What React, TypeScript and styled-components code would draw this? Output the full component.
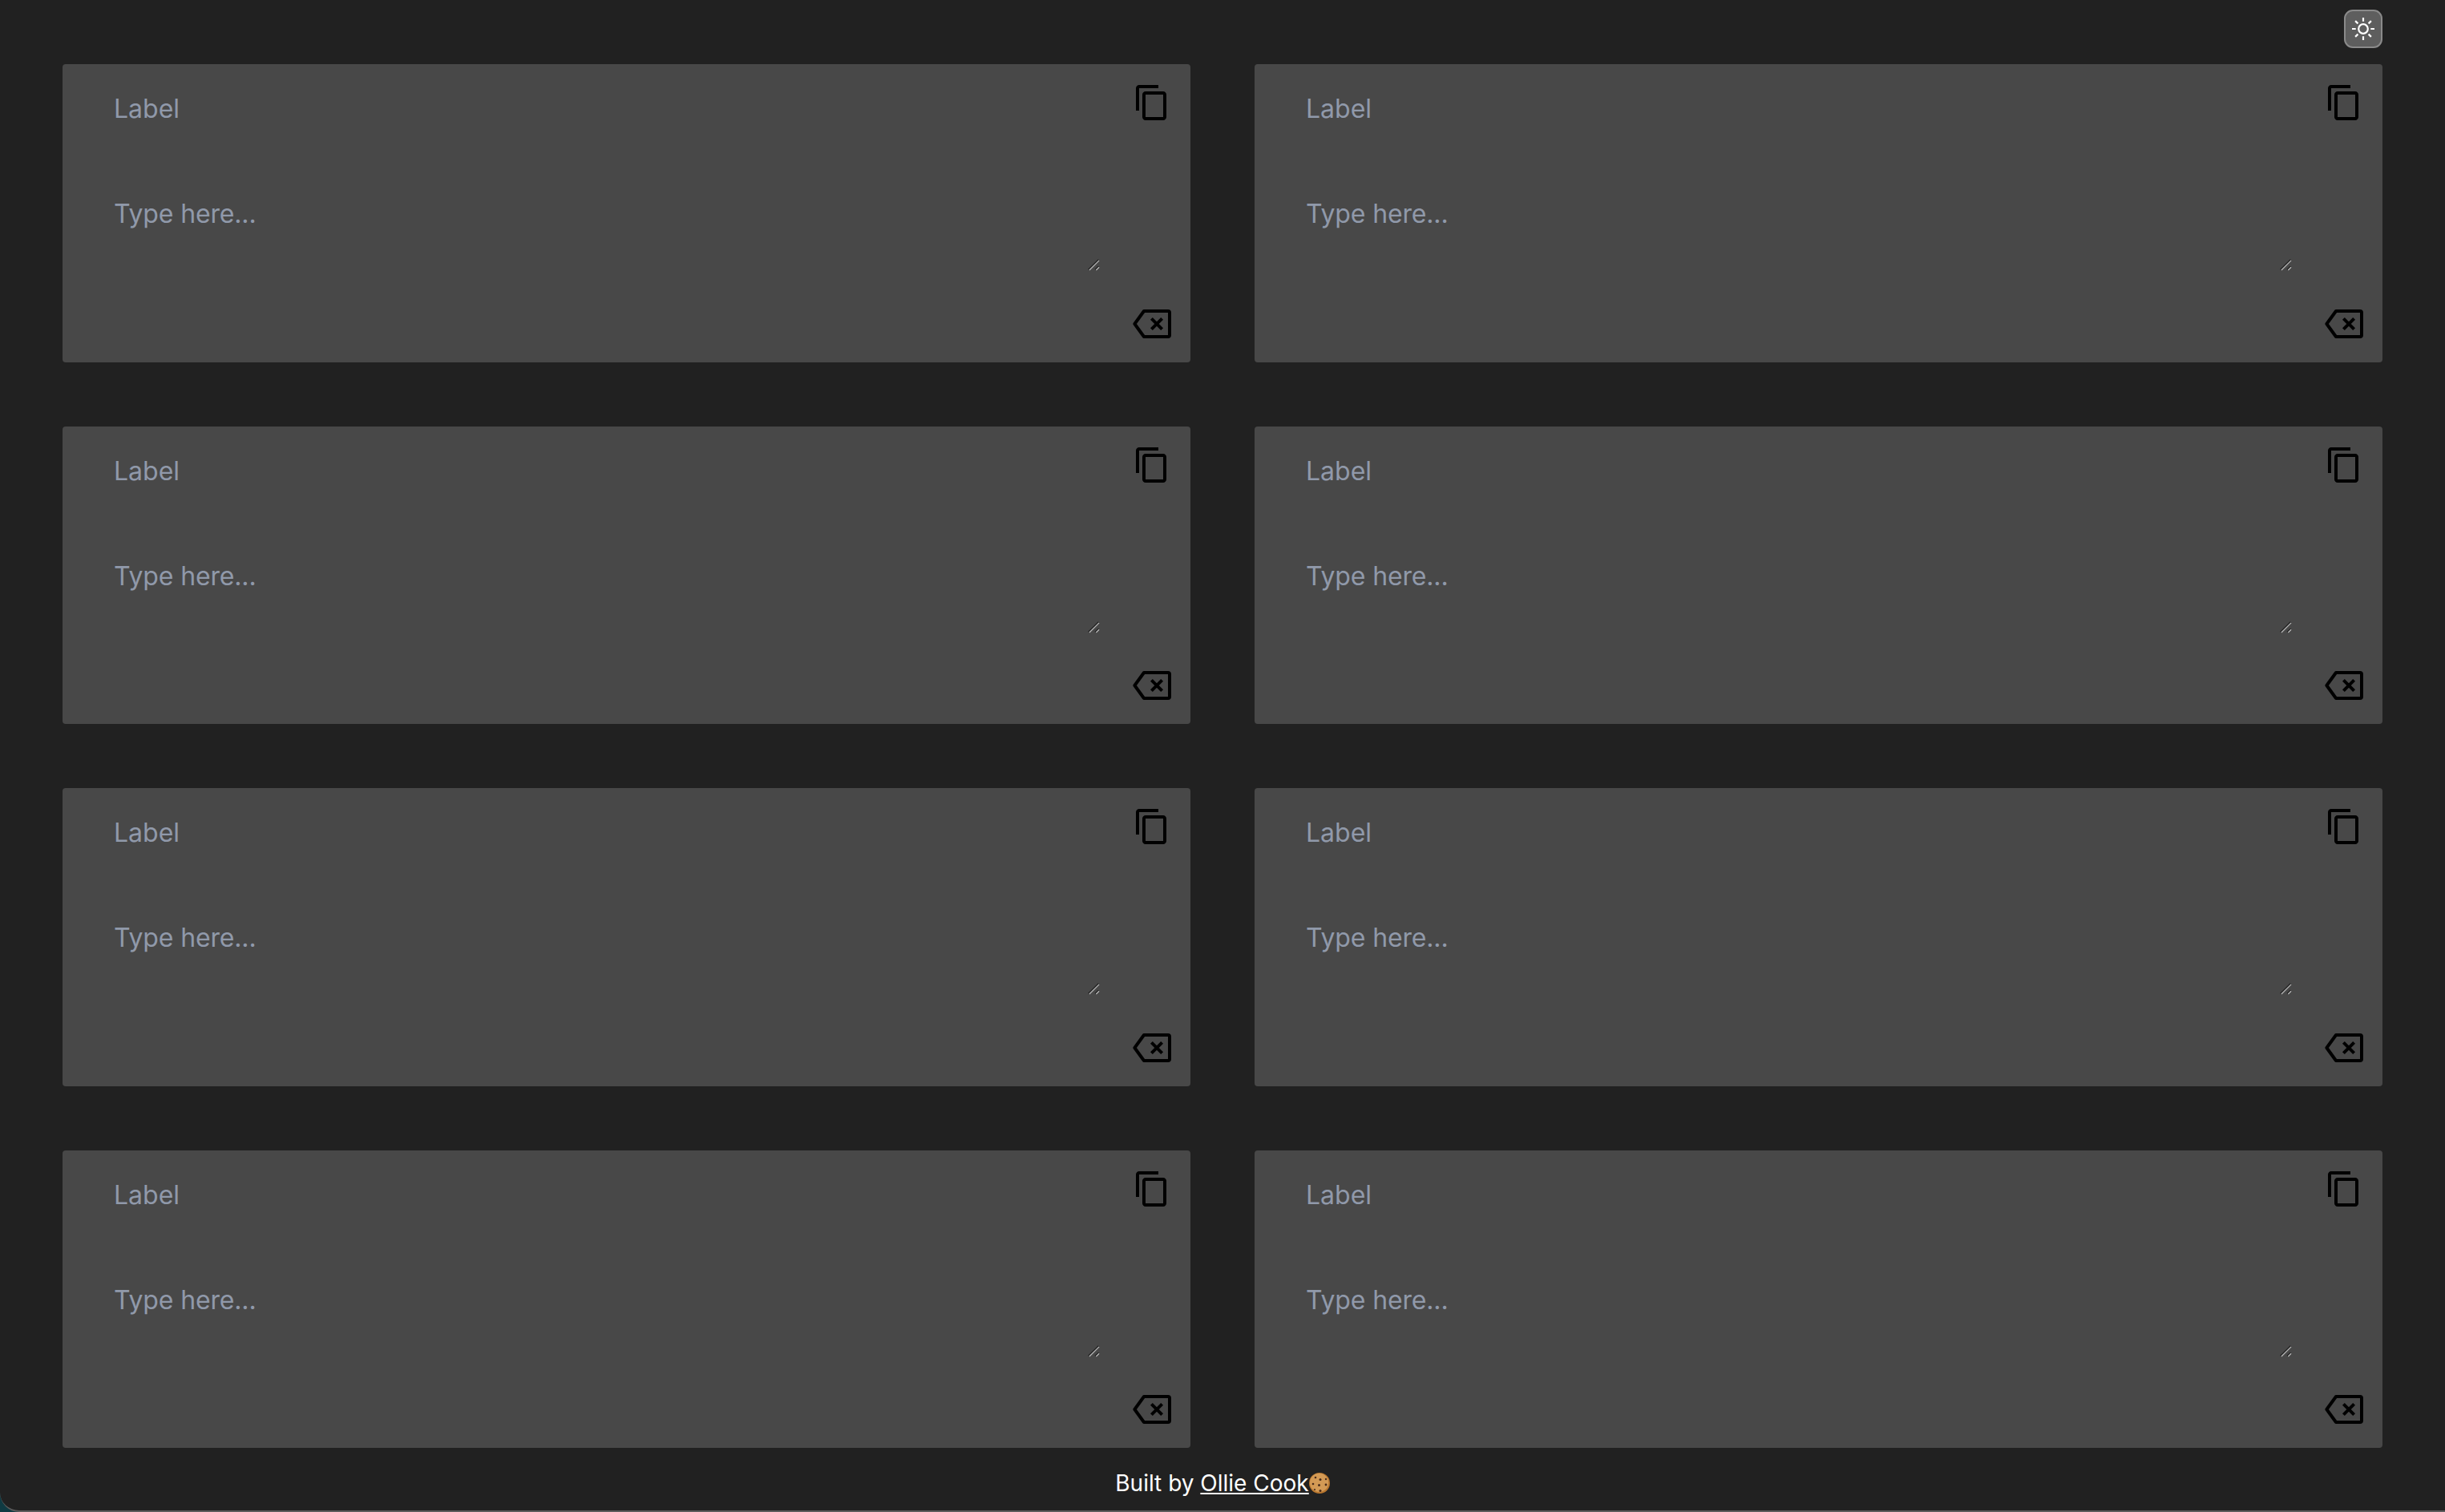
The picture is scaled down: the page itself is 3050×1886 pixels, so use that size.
import React from 'react';
import styled, { createGlobalStyle } from 'styled-components';

const GlobalStyle = createGlobalStyle`
  html, body {
    margin: 0;
    padding: 0;
    background-color: #0f3a42;
  }
  * {
    box-sizing: border-box;
  }
`;

const CopyIcon = () => (
  <svg width="48" height="48" viewBox="0 0 24 24" fill="#000">
    <path d="M16 1H4c-1.1 0-2 .9-2 2v14h2V3h12V1zm3 4H8c-1.1 0-2 .9-2 2v14c0 1.1.9 2 2 2h11c1.1 0 2-.9 2-2V7c0-1.1-.9-2-2-2zm0 16H8V7h11v14z" />
  </svg>
);

const BackspaceIcon = () => (
  <svg width="48" height="48" viewBox="0 0 24 24" fill="none" stroke="#000" strokeWidth="2" strokeLinejoin="round">
    <path d="M7 4h15a1 1 0 0 1 1 1v14a1 1 0 0 1-1 1H7L1.2 12Z" />
    <path d="M11.7 8.7l6.6 6.6M18.3 8.7l-6.6 6.6" />
  </svg>
);

const SunIcon = () => (
  <svg width="32" height="32" viewBox="0 0 32 32" fill="none" stroke="#fff" strokeWidth="2.2">
    <circle cx="16" cy="16" r="5.8" />
    <path d="M16 2v4.7M16 25.3V30M2 16h4.7M25.3 16H30M6.1 6.1l3.3 3.3M22.6 22.6l3.3 3.3M6.1 25.9l3.3-3.3M22.6 9.4l3.3-3.3" />
  </svg>
);

const ResizeGrip = () => (
  <Grip viewBox="0 0 16 16">
    <path d="M1 14.5 14.5 1M10 14.5l4.5-4.5" stroke="#222" strokeWidth="2.2" />
    <path d="M2 15 15 2M11 15l4-4" stroke="#b8b8b8" strokeWidth="1.4" />
  </Grip>
);

const Field = () => (
  <Card>
    <IconButton $corner="top">
      <CopyIcon />
    </IconButton>
    <Label>Label</Label>
    <InputWrap>
      <Input placeholder="Type here..." />
      <ResizeGrip />
    </InputWrap>
    <IconButton $corner="bottom">
      <BackspaceIcon />
    </IconButton>
  </Card>
);

export default function App() {
  return (
    <>
      <GlobalStyle />
      <Page>
        <TopBar>
          <ThemeToggle>
            <SunIcon />
          </ThemeToggle>
        </TopBar>
        <Grid>
          {Array.from({ length: 8 }, (_, i) => (
            <Field key={i} />
          ))}
        </Grid>
        <Footer>
          Built by <FooterLink href="#">Ollie Cook</FooterLink>
          <Cookie viewBox="0 0 26 26">
            <circle cx="13" cy="13" r="13" fill="#b9772f" />
            <circle cx="12.6" cy="12.4" r="11.6" fill="#d39a55" />
            <circle cx="8" cy="6" r="1.3" fill="#4a2c1a" />
            <circle cx="14" cy="8.5" r="1.5" fill="#4a2c1a" />
            <circle cx="21" cy="8" r="1.2" fill="#4a2c1a" />
            <circle cx="5" cy="14" r="1.3" fill="#4a2c1a" />
            <circle cx="12.5" cy="15.5" r="1.5" fill="#4a2c1a" />
            <circle cx="21" cy="15" r="1.4" fill="#4a2c1a" />
            <circle cx="14" cy="22.5" r="1.5" fill="#4a2c1a" />
            <circle cx="7" cy="21" r="1.1" fill="#4a2c1a" />
          </Cookie>
        </Footer>
      </Page>
    </>
  );
}

const Page = styled.div`
  width: 100%;
  height: 1886px;
  overflow: hidden;
  background-color: #212121;
  border-bottom: 2px solid #5c5c5c;
  border-bottom-left-radius: 24px;
  display: flex;
  flex-direction: column;
  font-family: Inter, "Liberation Sans", sans-serif;
`;

const TopBar = styled.div`
  height: 80px;
  flex-shrink: 0;
  padding: 12px 78px 0 0;
  display: flex;
  justify-content: flex-end;
  align-items: flex-start;
`;

const ThemeToggle = styled.button`
  width: 48px;
  height: 48px;
  padding: 0;
  background-color: #5e5e5e;
  border: 2px solid #8a8a8a;
  border-radius: 11px;
  display: flex;
  align-items: center;
  justify-content: center;
`;

const Grid = styled.div`
  padding: 0 78px;
  display: grid;
  grid-template-columns: repeat(2, 1407px);
  grid-auto-rows: 371.5px;
  column-gap: 80px;
  row-gap: 80px;
`;

const Card = styled.div`
  position: relative;
  padding: 36px 64px 0;
  background-color: #484848;
  border-radius: 4px;
  display: flex;
  flex-direction: column;
`;

const Label = styled.label`
  color: #9099aa;
  font-size: 32px;
  line-height: 40px;
`;

const InputWrap = styled.div`
  position: relative;
  width: 1232px;
  height: 95px;
  margin-top: 87px;
`;

const Input = styled.textarea`
  display: block;
  width: 100%;
  height: 100%;
  padding: 0;
  background: transparent;
  border: none;
  outline: none;
  resize: none;
  color: #fff;
  font-family: inherit;
  font-size: 32px;
  line-height: 48px;
  letter-spacing: -0.15px;
  &::placeholder {
    color: #9099aa;
    opacity: 1;
  }
`;

const Grip = styled.svg`
  position: absolute;
  right: 2px;
  bottom: 0;
  width: 15px;
  height: 15px;
  pointer-events: none;
`;

const IconButton = styled.button<{ $corner: 'top' | 'bottom' }>`
  position: absolute;
  right: 24px;
  ${(p) => (p.$corner === 'top' ? 'top: 24px;' : 'bottom: 24px;')}
  width: 48px;
  height: 48px;
  padding: 0;
  background: none;
  border: none;
  display: flex;
`;

const Footer = styled.div`
  margin-top: 20px;
  display: flex;
  justify-content: center;
  align-items: center;
  color: #fff;
  font-size: 28px;
  line-height: 48px;
  white-space: pre;
`;

const FooterLink = styled.a`
  color: #fff;
  text-decoration: underline;
`;

const Cookie = styled.svg`
  width: 26px;
  height: 26px;
`;
